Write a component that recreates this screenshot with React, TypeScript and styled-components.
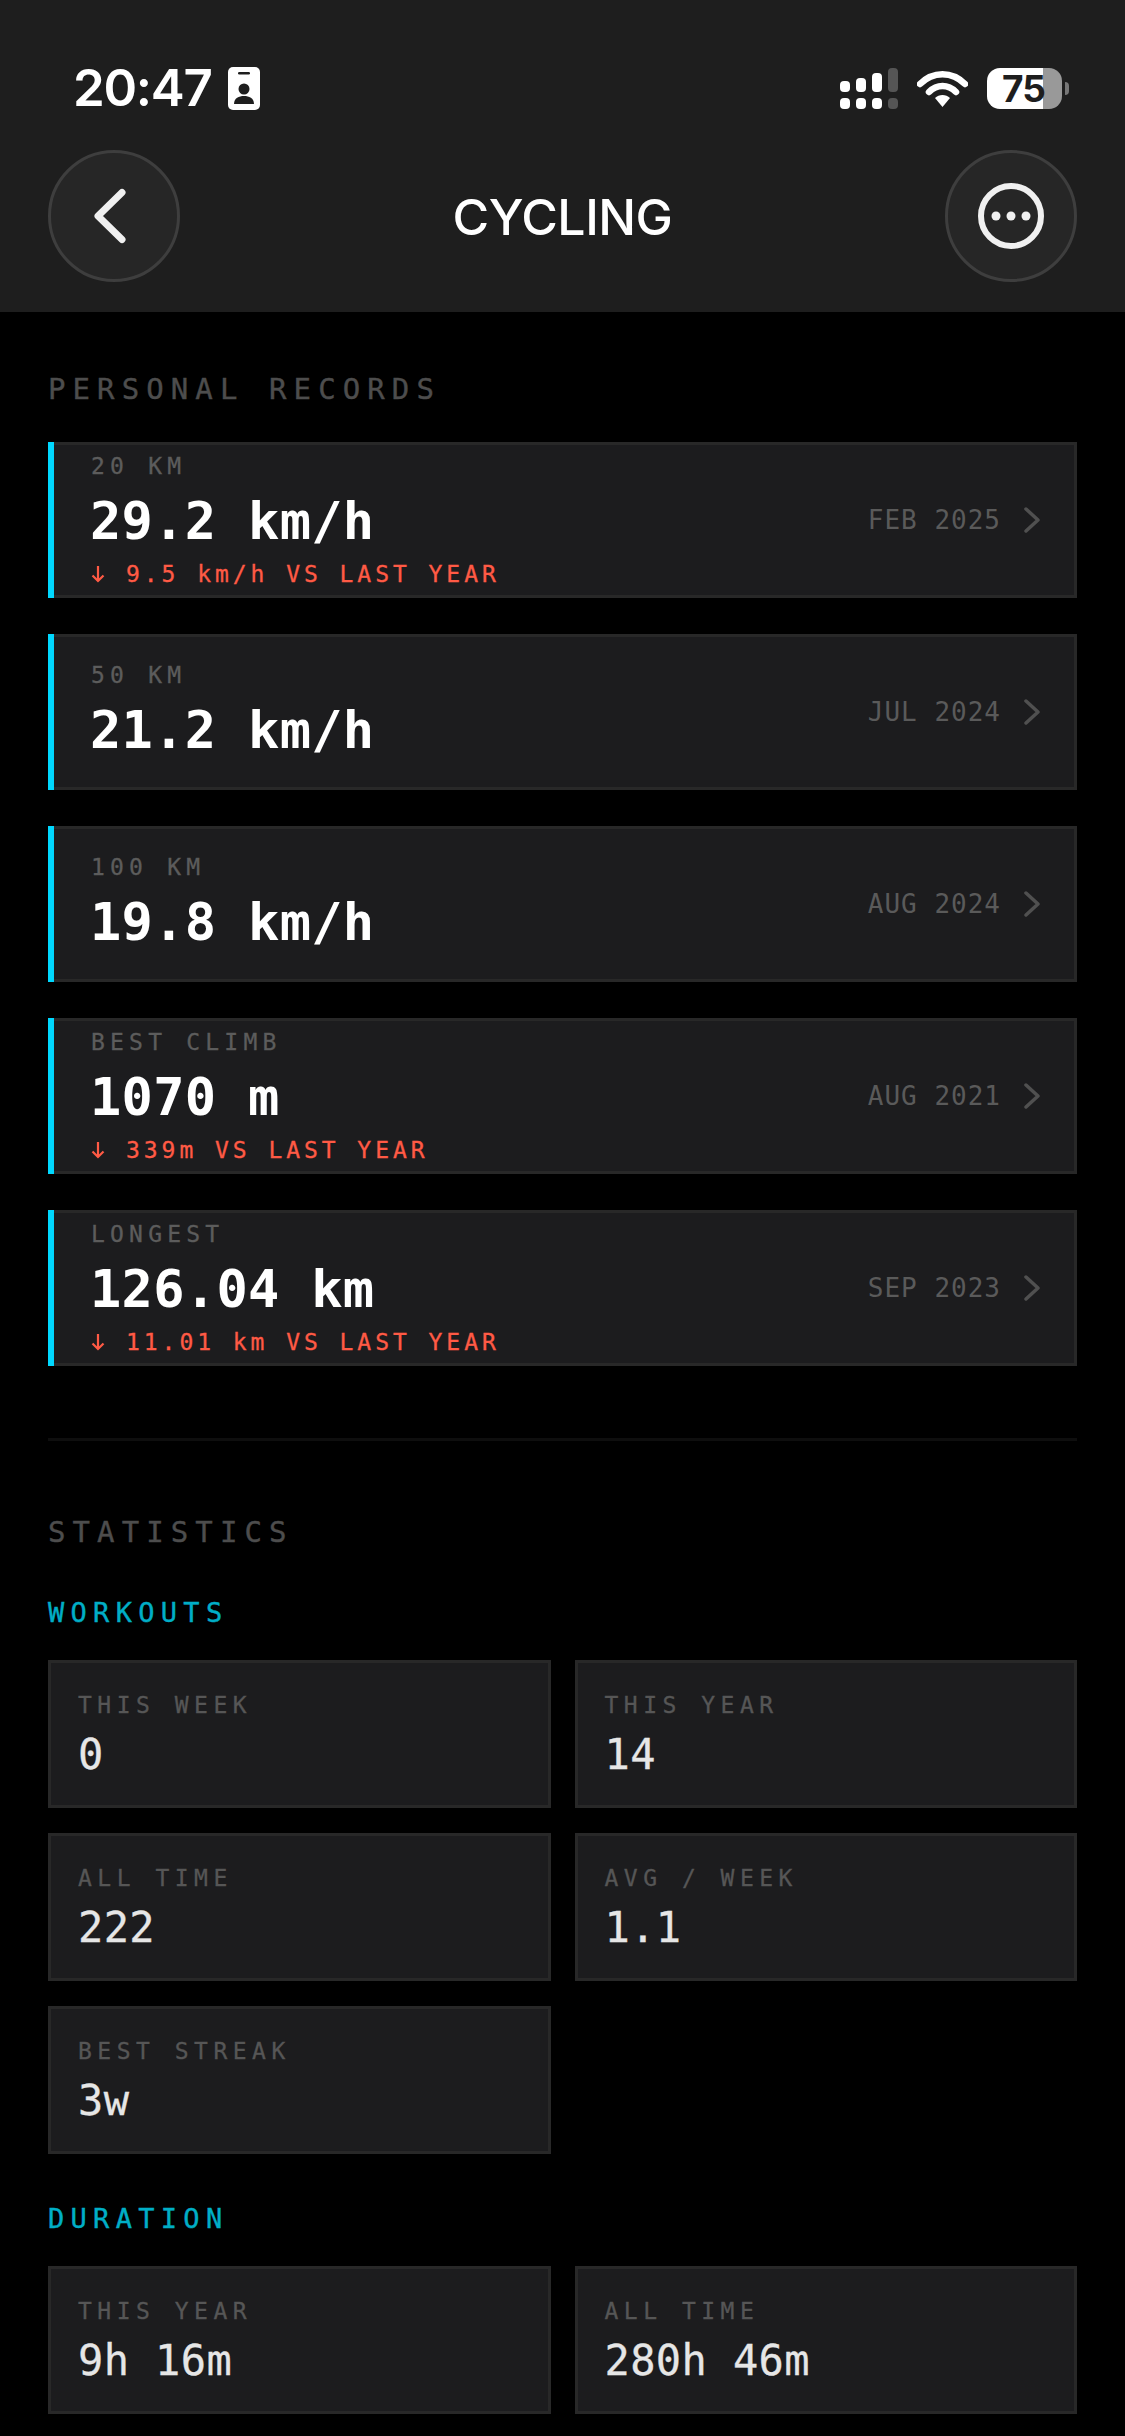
import styled, { createGlobalStyle } from 'styled-components'

const mono = `'DejaVu Sans Mono', 'Liberation Mono', monospace`

const records = [
  { label: '20 KM', value: '29.2 km/h', delta: '9.5 km/h VS LAST YEAR', date: 'FEB 2025' },
  { label: '50 KM', value: '21.2 km/h', date: 'JUL 2024' },
  { label: '100 KM', value: '19.8 km/h', date: 'AUG 2024' },
  { label: 'BEST CLIMB', value: '1070 m', delta: '339m VS LAST YEAR', date: 'AUG 2021' },
  { label: 'LONGEST', value: '126.04 km', delta: '11.01 km VS LAST YEAR', date: 'SEP 2023' },
]

const workouts = [
  { label: 'THIS WEEK', value: '0' },
  { label: 'THIS YEAR', value: '14' },
  { label: 'ALL TIME', value: '222' },
  { label: 'AVG / WEEK', value: '1.1' },
  { label: 'BEST STREAK', value: '3w' },
]

const duration = [
  { label: 'THIS YEAR', value: '9h 16m' },
  { label: 'ALL TIME', value: '280h 46m' },
]

const GlobalStyle = createGlobalStyle`
  html, body {
    margin: 0;
    background: #000;
  }
  body {
    height: 2436px;
    overflow: hidden;
    font-family: ${mono};
  }
`

const Header = styled.header`
  height: 312px;
  box-sizing: border-box;
  padding-top: 58px;
  background: #1e1e1e;
`

const StatusBar = styled.div`
  display: flex;
  align-items: center;
  justify-content: space-between;
  height: 60px;
  padding: 0 63px 0 73px;
`

const StatusGroup = styled.div`
  display: flex;
  align-items: center;
`

const Time = styled.span`
  font-family: Inter, sans-serif;
  font-size: 51px;
  font-weight: 600;
  line-height: 60px;
  letter-spacing: -1.3px;
  color: #fff;
  margin-right: 16px;
`

const WifiIcon = styled.svg`
  margin: 0 19px;
`

const Battery = styled.div`
  position: relative;
  width: 75px;
  height: 41px;
  border-radius: 13px;
  background: linear-gradient(to right, #fff 0 56px, #999 56px);
  box-sizing: border-box;
  padding-left: 15px;
  font-family: Inter, sans-serif;
  font-size: 37px;
  font-weight: 700;
  line-height: 42px;
  letter-spacing: -1px;
  color: #1e1e1e;

  &::after {
    content: '';
    position: absolute;
    top: 14px;
    right: -7px;
    width: 4px;
    height: 13px;
    border-radius: 0 7px 7px 0;
    background: #777;
  }
`

const Nav = styled.nav`
  display: flex;
  align-items: center;
  justify-content: space-between;
  margin-top: 32px;
  padding: 0 48px;
`

const RoundButton = styled.button`
  display: flex;
  align-items: center;
  justify-content: center;
  width: 132px;
  height: 132px;
  padding: 0;
  border: 3px solid #3e3e3e;
  border-radius: 50%;
  background: #262626;
`

const Title = styled.h1`
  margin: 0;
  padding-top: 2px;
  font-family: Inter, sans-serif;
  font-size: 50px;
  font-weight: 500;
  letter-spacing: -0.5px;
  color: #fff;
`

const Main = styled.main`
  padding: 57px 48px 0;
`

const SectionTitle = styled.h2<{ $top?: number; $bottom?: number }>`
  margin: ${(p) => p.$top ?? 0}px 0 ${(p) => p.$bottom ?? 33}px;
  font-size: 29px;
  font-weight: 400;
  line-height: 40px;
  letter-spacing: 7.1px;
  color: #4d4d4d;
  -webkit-text-stroke: 0.4px #4d4d4d;
`

const RecordList = styled.div`
  display: flex;
  flex-direction: column;
  gap: 36px;
`

const RecordCard = styled.div`
  position: relative;
  display: flex;
  align-items: center;
  justify-content: space-between;
  height: 156px;
  box-sizing: border-box;
  padding: 0 34px 0 40px;
  background: #1c1c1e;
  border: 3px solid #282828;

  &::before {
    content: '';
    position: absolute;
    top: -3px;
    bottom: -3px;
    left: -3px;
    width: 6px;
    background: #00d8ff;
  }
`

const RecordLabel = styled.div`
  font-size: 23px;
  line-height: 34px;
  letter-spacing: 5.2px;
  color: #5c5c5c;
  -webkit-text-stroke: 0.3px #5c5c5c;
`

const RecordValue = styled.div`
  margin: 2px 0 0 -1px;
  font-size: 52px;
  font-weight: 700;
  line-height: 72px;
  letter-spacing: 0.3px;
  color: #fff;
`

const Delta = styled.div`
  display: flex;
  align-items: center;
  margin-top: -1px;
  font-size: 23px;
  line-height: 36px;
  letter-spacing: 3.95px;
  color: #ff5a45;
  -webkit-text-stroke: 0.3px #ff5a45;
`

const DeltaArrow = styled.svg`
  margin-right: 21px;
  flex: none;
`

const RecordSide = styled.div`
  display: flex;
  align-items: center;
  gap: 23px;
`

const RecordDate = styled.span`
  font-size: 26px;
  letter-spacing: 1px;
  color: #5a5a5a;
`

const Divider = styled.hr`
  height: 3px;
  margin: 72px 0 0;
  border: 0;
  background: #0e0e0e;
`

const GroupTitle = styled.h3<{ $top: number }>`
  margin: ${(p) => p.$top}px 0 29px;
  padding-top: 1px;
  font-size: 27px;
  font-weight: 400;
  line-height: 36px;
  letter-spacing: 6.3px;
  color: #00aec6;
  -webkit-text-stroke: 0.4px #00aec6;
`

const StatGrid = styled.div`
  display: grid;
  grid-template-columns: 1fr 1fr;
  gap: 25px 24px;
`

const StatCard = styled.div`
  height: 148px;
  box-sizing: border-box;
  padding: 25px 27px 0;
  background: #1c1c1e;
  border: 3px solid #282828;
`

const StatLabel = styled.div`
  font-size: 23px;
  line-height: 34px;
  letter-spacing: 5.5px;
  color: #565656;
  -webkit-text-stroke: 0.3px #565656;
`

const StatValue = styled.div`
  margin-top: 7px;
  font-size: 42px;
  line-height: 52px;
  letter-spacing: 0.4px;
  color: #e6e6e6;
  -webkit-text-stroke: 0.3px #e6e6e6;
`

const Chevron = () => (
  <svg width="16" height="26" viewBox="0 0 16 26">
    <path d="M2 2 L14 13 L2 24" fill="none" stroke="#505050" strokeWidth="3.5" strokeLinecap="round" strokeLinejoin="round" />
  </svg>
)

const Stats = ({ items }: { items: { label: string; value: string }[] }) => (
  <StatGrid>
    {items.map((item) => (
      <StatCard key={item.label}>
        <StatLabel>{item.label}</StatLabel>
        <StatValue>{item.value}</StatValue>
      </StatCard>
    ))}
  </StatGrid>
)

export default function App() {
  return (
    <>
      <GlobalStyle />
      <Header>
        <StatusBar>
          <StatusGroup>
            <Time>20:47</Time>
            <svg width="32" height="43" viewBox="0 0 32 43">
              <rect width="32" height="43" rx="5" fill="#fff" />
              <rect x="10" y="5" width="12" height="2.5" rx="1.2" fill="#1e1e1e" />
              <circle cx="16" cy="22" r="5.5" fill="#1e1e1e" />
              <path d="M6 37 C6 31 11 29 16 29 C21 29 26 31 26 37 Z" fill="#1e1e1e" />
            </svg>
          </StatusGroup>
          <StatusGroup>
            <svg width="58" height="41" viewBox="0 0 58 41">
              <rect x="0" y="13" width="10" height="11" rx="4" fill="#fff" />
              <rect x="16" y="10" width="10" height="14" rx="4" fill="#fff" />
              <rect x="32" y="5" width="10" height="19" rx="4" fill="#fff" />
              <rect x="48" y="0" width="10" height="24" rx="4" fill="#555" />
              <rect x="0" y="30" width="10" height="11" rx="4" fill="#fff" />
              <rect x="16" y="30" width="10" height="11" rx="4" fill="#fff" />
              <rect x="32" y="30" width="10" height="11" rx="4" fill="#fff" />
              <rect x="48" y="30" width="10" height="11" rx="4" fill="#555" />
            </svg>
            <WifiIcon width="51" height="37" viewBox="0 0 51 37">
              <path d="M3 14 C16 1 35 1 48 14" fill="none" stroke="#fff" strokeWidth="6.5" strokeLinecap="round" />
              <path d="M12 22 C20 14 31 14 39 22" fill="none" stroke="#fff" strokeWidth="6.5" strokeLinecap="round" />
              <path d="M18 28 C22 24 29 24 33 28 L25.5 37 Z" fill="#fff" />
            </WifiIcon>
            <Battery>75</Battery>
          </StatusGroup>
        </StatusBar>
        <Nav>
          <RoundButton aria-label="Back">
            <svg width="40" height="60" viewBox="0 0 40 60">
              <path d="M28 6.5 L4 30 L28 53.5" fill="none" stroke="#f0f0f0" strokeWidth="7" strokeLinecap="round" strokeLinejoin="round" />
            </svg>
          </RoundButton>
          <Title>CYCLING</Title>
          <RoundButton aria-label="More">
            <svg width="66" height="66" viewBox="0 0 66 66">
              <circle cx="33" cy="33" r="30" fill="none" stroke="#f0f0f0" strokeWidth="6" />
              <circle cx="18" cy="33" r="4.5" fill="#f0f0f0" />
              <circle cx="33" cy="33" r="4.5" fill="#f0f0f0" />
              <circle cx="48" cy="33" r="4.5" fill="#f0f0f0" />
            </svg>
          </RoundButton>
        </Nav>
      </Header>
      <Main>
        <SectionTitle>PERSONAL RECORDS</SectionTitle>
        <RecordList>
          {records.map((record) => (
            <RecordCard key={record.label}>
              <div>
                <RecordLabel>{record.label}</RecordLabel>
                <RecordValue>{record.value}</RecordValue>
                {record.delta && (
                  <Delta>
                    <DeltaArrow width="14" height="18" viewBox="0 0 14 18">
                      <path d="M7 1 V16 M1.5 10.5 L7 16 L12.5 10.5" fill="none" stroke="#ff5a45" strokeWidth="2.2" />
                    </DeltaArrow>
                    {record.delta}
                  </Delta>
                )}
              </div>
              <RecordSide>
                <RecordDate>{record.date}</RecordDate>
                <Chevron />
              </RecordSide>
            </RecordCard>
          ))}
        </RecordList>
        <Divider />
        <SectionTitle $top={71} $bottom={0}>STATISTICS</SectionTitle>
        <GroupTitle $top={42}>WORKOUTS</GroupTitle>
        <Stats items={workouts} />
        <GroupTitle $top={46}>DURATION</GroupTitle>
        <Stats items={duration} />
      </Main>
    </>
  )
}
